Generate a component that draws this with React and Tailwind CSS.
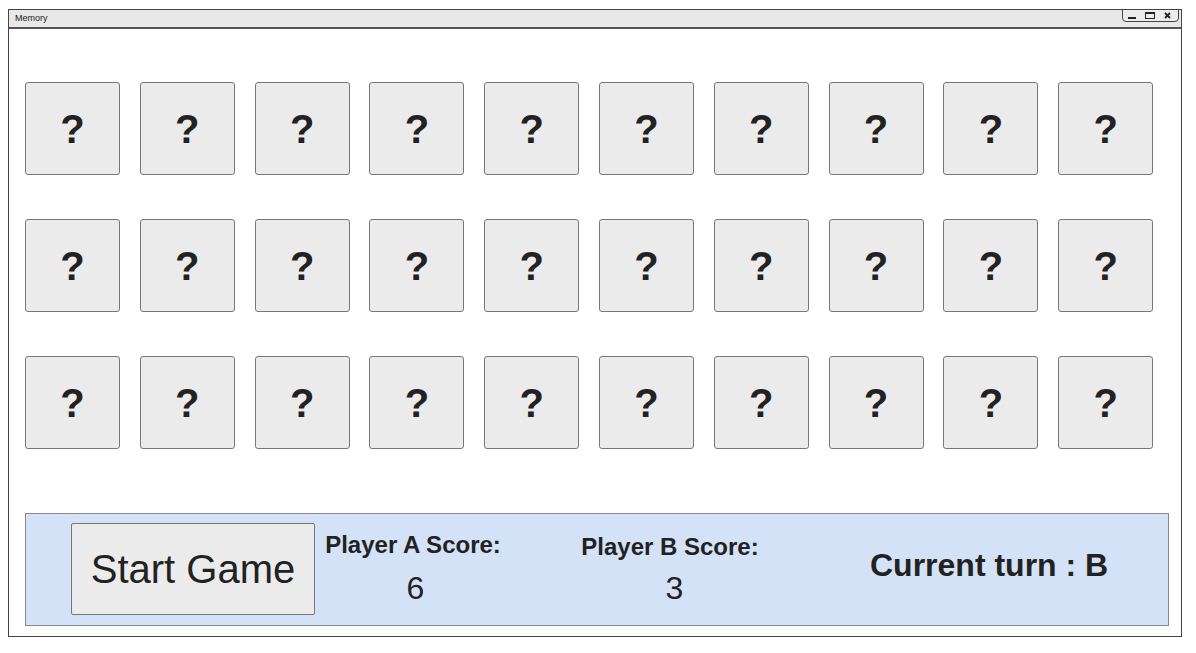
import React from "react";

const cards = Array.from({ length: 30 }, (_, i) => i);

function WindowControls() {
  return (
    <div className="absolute right-[2px] top-[-1px] flex h-[13px] w-[57px] items-center justify-between rounded-b-[4px] border border-[#444] bg-[#ececec] pl-[5px] pr-[7px]">
      <div className="mt-[5px] h-[2px] w-[8px] bg-[#222]" />
      <div className="h-[7px] w-[10px] border border-t-2 border-[#222]" />
      <svg width="7" height="7" viewBox="0 0 7 7">
        <path d="M1 1 L6 6 M6 1 L1 6" stroke="#222" strokeWidth="1.8" />
      </svg>
    </div>
  );
}

function Card() {
  return (
    <div className="flex h-[93px] w-[95px] items-center justify-center rounded-[3px] border border-[#777] bg-[#ebebeb]">
      <span className="text-[40px] font-bold leading-none text-[#222]">?</span>
    </div>
  );
}

export default function App() {
  return (
    <div
      className="h-[653px] w-[1196px] bg-white pl-[8px] pt-[9px]"
      style={{ fontFamily: '"Liberation Sans", Arial, sans-serif' }}
    >
      <div className="flex h-[628px] w-[1174px] flex-col border border-[#444] bg-white">
        <div className="relative flex h-[19px] items-center border-b-2 border-[#555] bg-[#e8e8e8] pl-[6px]">
          <span className="text-[9px] text-[#222]">Memory</span>
          <WindowControls />
        </div>

        <div className="grid grid-cols-[repeat(10,95px)] gap-x-[19.8px] gap-y-[44px] pl-[16px] pt-[53px]">
          {cards.map((c) => (
            <Card key={c} />
          ))}
        </div>

        <div className="ml-[16px] mt-[64px] flex h-[113px] w-[1144px] items-start border border-[#888] bg-[#d4e2f8] pl-[45px] pt-[9px]">
          <button className="flex h-[92px] w-[244px] shrink-0 items-center justify-center rounded-[2px] border border-[#777] bg-[#ebebeb] text-[40px] leading-none text-[#222]">
            Start Game
          </button>

          <div className="ml-[3px] flex w-[190px] shrink-0 flex-col items-center pt-[10px]">
            <span className="text-[24px] font-bold leading-none text-[#222]">Player A Score:</span>
            <span className="ml-[5px] mt-[15px] text-[32px] leading-none text-[#222]">6</span>
          </div>

          <div className="ml-[67px] flex w-[190px] shrink-0 flex-col items-center pt-[12px]">
            <span className="text-[24px] font-bold leading-none text-[#222]">Player B Score:</span>
            <span className="ml-[9px] mt-[13px] text-[32px] leading-none text-[#222]">3</span>
          </div>

          <div className="ml-[105px] shrink-0 pt-[26px]">
            <span className="text-[32px] font-bold leading-none text-[#222]">Current turn : B</span>
          </div>
        </div>
      </div>
    </div>
  );
}
